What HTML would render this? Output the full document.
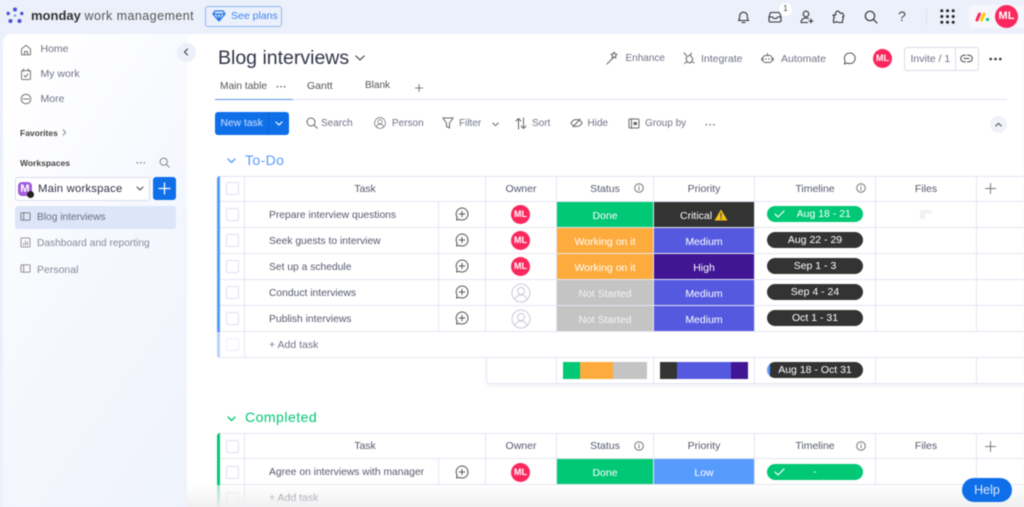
<!DOCTYPE html>
<html><head><meta charset="utf-8"><title>Blog interviews</title>
<style>
html,body{margin:0;padding:0;width:1024px;height:507px;overflow:hidden;background:#ecf0fb}
#p{position:absolute;left:0;top:0;width:1024px;height:507px;overflow:hidden;font-family:"Liberation Sans",sans-serif;color:#4b4e69;filter:blur(.5px)}
#p div,#p span,#p svg{position:absolute}
.t{white-space:nowrap;line-height:14px;font-size:10.5px}
.c{text-align:center;white-space:nowrap;line-height:14px;font-size:10.5px}
.h{color:#55586c;font-size:10.5px;text-align:center;white-space:nowrap;line-height:14px}
.l{background:#e4e6f3}
.b{width:11px;height:11px;border:1px solid #dfe1ee;border-radius:2px;left:226px;background:#fff}
.cell{text-align:center;color:#fff;font-size:10.5px;line-height:28.5px;white-space:nowrap}
.pill{left:767px;width:96px;height:16px;border-radius:8px;background:#333;color:#fff;text-align:center;font-size:10.5px;line-height:16px;white-space:nowrap}
.av{width:19px;height:19px;border-radius:50%;background:#fb275d;color:#fff;font-size:9px;font-weight:bold;line-height:19px;text-align:center}
svg{fill:none;stroke:#5a5d72;stroke-width:1;stroke-linecap:round;stroke-linejoin:round}
.g{color:#6f7285}
</style></head><body>
<div id="p">
<svg width="0" height="0"><defs>
<symbol id="cm" viewBox="0 0 14 14"><path d="M7 1a6 6 0 1 1-2.6 11.4L1.500 13l.7-2.700A6 6 0 0 1 7 1zM7 4.200v5.600M4.200 7h5.600"/></symbol>
<symbol id="pr" viewBox="0 0 20 20"><circle cx="10" cy="10" r="9"/><circle cx="10" cy="8" r="3.500"/><path d="M4 16.500c1-3.500 3.500-4.500 6-4.500s5 1 6 4.500"/></symbol>
<symbol id="in" viewBox="0 0 10 10"><circle cx="5" cy="5" r="4.300"/><path d="M5 4.500v2.500M5 2.900v.2"/></symbol>
<symbol id="pg" viewBox="0 0 12 12"><rect x="1" y="2" width="10" height="8" rx="1"/><path d="M4 2v8"/></symbol>
</defs></svg>

<!-- sidebar & main -->
<div style="left:3px;top:34px;width:200px;height:473px;border-radius:8px 0 0 0;background:linear-gradient(125deg,#fff 10%,#f5f7fe 55%,#eff3fc 100%)"></div>
<div style="left:187px;top:34px;width:837px;height:473px;background:#fff;border-radius:8px 0 0 0"></div>

<!-- top bar -->
<svg style="left:5px;top:6px" width="20" height="20" viewBox="0 0 20 20"><g fill="#4b50d6" stroke="none"><circle cx="10" cy="3.500" r="2"/><circle cx="3.200" cy="7.500" r="1.700"/><circle cx="16.800" cy="7.500" r="1.700"/><circle cx="10" cy="9.500" r="1.300" fill="#8f93ea"/><circle cx="5.500" cy="15" r="2"/><circle cx="14.500" cy="15" r="2"/></g></svg>
<span class="t" style="left:31px;top:9px;font-size:13px;font-weight:bold;color:#333">monday</span>
<span class="t" style="left:84.500px;top:9px;font-size:12.500px;color:#555;letter-spacing:.45px">work management</span>
<div style="left:205px;top:6px;width:75px;height:19px;border:1px solid #8fb8f4;border-radius:3px"></div>
<svg style="left:212px;top:10px;stroke:#1f76ea;stroke-width:1.300" width="14" height="12" viewBox="0 0 14 12"><path d="M3 1h8l2 3-6 7-6-7zM1 4h12M5 4l2 7 2-7"/></svg>
<span class="t" style="left:231px;top:9px;color:#3c85ee;font-size:10.500px">See plans</span>

<svg style="left:737px;top:10px;stroke:#333;stroke-width:1.100" width="13" height="14" viewBox="0 0 13 14"><path d="M1.500 10.500c1-1 1.200-2 1.200-4.500a3.800 3.800 0 0 1 7.600 0c0 2.500.2 3.500 1.200 4.500zM5 12.500h3"/></svg>
<svg style="left:768px;top:11px;stroke:#333;stroke-width:1.100" width="14" height="12" viewBox="0 0 14 12"><path d="M1 6l1.500-4.500h9L13 6v3.500a1.500 1.500 0 0 1-1.500 1.500h-9A1.500 1.500 0 0 1 1 9.500zM1 6h3.500l1 1.500h3l1-1.500H13"/></svg>
<div style="left:779px;top:3px;width:13px;height:13px;border-radius:50%;background:#fff"></div>
<span class="c" style="left:779px;top:2px;width:13px;font-size:8px;color:#444">1</span>
<svg style="left:800px;top:10px;stroke:#333;stroke-width:1.100" width="15" height="14" viewBox="0 0 15 14"><circle cx="6" cy="4" r="2.800"/><path d="M1 12.500c.3-3 2-4.500 5-4.500 1 0 1.800.2 2.500.6M1 12.500h6.500M11 9v4M9 11h4"/></svg>
<svg style="left:832px;top:10px;stroke:#333;stroke-width:1.100" width="14" height="14" viewBox="0 0 14 14"><path d="M1 5h3a2 2 0 0 1 3.500-3l1 1.500 2-.5 1.500 3-1.500 1a1.800 1.800 0 0 1 0 3V12.500H6a1.800 1.800 0 0 0-3 0H1.500V9a1.800 1.800 0 0 0 0-3z"/></svg>
<svg style="left:864px;top:10px;stroke:#333;stroke-width:1.200" width="14" height="14" viewBox="0 0 14 14"><circle cx="6" cy="6" r="4.700"/><path d="M9.500 9.500L13 13"/></svg>
<span class="t" style="left:897px;top:9px;font-size:14px;color:#444;width:10px;text-align:center">?</span>
<div style="left:926px;top:9px;width:1px;height:16px;background:#dde1ef"></div>
<svg style="left:940px;top:9px" width="15" height="15" viewBox="0 0 15 15"><g fill="#222" stroke="none"><circle cx="1.800" cy="1.800" r="1.500"/><circle cx="7.500" cy="1.800" r="1.500"/><circle cx="13.200" cy="1.800" r="1.500"/><circle cx="1.800" cy="7.500" r="1.500"/><circle cx="7.500" cy="7.500" r="1.500"/><circle cx="13.200" cy="7.500" r="1.500"/><circle cx="1.800" cy="13.200" r="1.500"/><circle cx="7.500" cy="13.200" r="1.500"/><circle cx="13.200" cy="13.200" r="1.500"/></g></svg>
<div style="left:969px;top:5px;width:55px;height:23px;background:#f5f7fd;border-radius:3px"></div>
<svg style="left:975px;top:11px;stroke-width:3" width="15" height="11" viewBox="0 0 15 11"><path d="M2 9l2.500-6" stroke="#fb275d"/><path d="M6.500 9L9 3" stroke="#ffcb00"/><circle cx="12.500" cy="8.500" r="1.600" fill="#00ca72" stroke="none"/></svg>
<div class="av" style="left:995px;top:5px;width:23px;height:23px;line-height:23px;font-size:11px">ML</div>

<!-- sidebar content -->
<div style="left:177px;top:43px;width:19px;height:19px;border-radius:50%;background:#ecf0fb"></div>
<svg style="left:183px;top:48px;stroke:#333" width="6" height="8" viewBox="0 0 6 8"><path d="M4.500 1L1.500 4l3 3"/></svg>

<svg style="left:20px;top:44px;stroke:#777" width="12" height="12" viewBox="0 0 12 12"><path d="M1.500 5L6 1.200 10.500 5v5.800h-9zM4.500 10.800V7.500h3v3.300"/></svg>
<span class="t g" style="left:40.500px;top:42px">Home</span>
<svg style="left:20px;top:68px;stroke:#777" width="12" height="13" viewBox="0 0 12 13"><rect x="1.500" y="2.500" width="9" height="9" rx="1"/><path d="M3.500 1v2.500M8.500 1v2.500M4 7.500l1.500 1.500L8 6"/></svg>
<span class="t g" style="left:40.500px;top:67px">My work</span>
<svg style="left:20px;top:93px;stroke:#777" width="12" height="12" viewBox="0 0 12 12"><circle cx="6" cy="6" r="4.800"/><path d="M3 6h6"/></svg>
<span class="t g" style="left:40.500px;top:91.500px">More</span>
<span class="t" style="left:20px;top:125.500px;font-size:8.500px;color:#444;font-weight:bold">Favorites</span>
<svg style="left:62px;top:129px;stroke:#888" width="5" height="7" viewBox="0 0 5 7"><path d="M1 .8l2.700 2.700L1 6.200"/></svg>
<span class="t" style="left:20px;top:155.500px;font-size:8.500px;color:#444;font-weight:bold">Workspaces</span>
<span class="t" style="left:136px;top:156px;font-size:9px;color:#777;font-weight:bold;letter-spacing:.5px">···</span>
<svg style="left:159px;top:157px;stroke:#888" width="11" height="11" viewBox="0 0 11 11"><circle cx="4.700" cy="4.700" r="3.600"/><path d="M7.500 7.500l2.800 2.800"/></svg>
<div style="left:15px;top:177px;width:133px;height:22px;border:1px solid #d9dcea;border-radius:3px;background:#fff"></div>
<div style="left:18px;top:182px;width:14px;height:14px;border-radius:4px;background:#a25ddc;color:#fff;font-size:11px;font-weight:bold;line-height:14px;text-align:center">M</div>
<div style="left:27px;top:191px;width:7px;height:7px;border-radius:50%;background:#222"></div>
<span class="t" style="left:38px;top:181.500px;font-size:11.300px;color:#2f3146;letter-spacing:.2px">Main workspace</span>
<svg style="left:136px;top:186px;stroke:#444" width="8" height="6" viewBox="0 0 8 6"><path d="M1 1l3 3 3-3"/></svg>
<div style="left:153px;top:177px;width:23px;height:23px;background:#0f6fe8;border-radius:3px"></div>
<svg style="left:158px;top:182px;stroke:#fff;stroke-width:1.300" width="13" height="13" viewBox="0 0 13 13"><path d="M6.500 1v11M1 6.500h11"/></svg>
<div style="left:15px;top:206px;width:161px;height:23px;background:#dce6f8;border-radius:3px"></div>
<svg style="left:20px;top:211px;stroke:#777" width="11" height="11"><use href="#pg"/></svg>
<span class="t g" style="left:37px;top:211px;font-size:10.200px;color:#6a6d80">Blog interviews</span>
<svg style="left:20px;top:237px;stroke:#999" width="11" height="11" viewBox="0 0 11 11"><rect x="1" y="1" width="9" height="9" rx="1"/><path d="M3.500 8V6.500M5.500 8V4M7.500 8V5"/></svg>
<span class="t g" style="left:37px;top:237px;font-size:10.200px;color:#85889a">Dashboard and reporting</span>
<svg style="left:20px;top:263px;stroke:#888" width="11" height="11"><use href="#pg"/></svg>
<span class="t g" style="left:37px;top:262.500px;color:#85889a">Personal</span>

<!-- board header -->
<span class="t" style="left:218px;top:47px;font-size:19.500px;line-height:23px;color:#33354a">Blog interviews</span>
<svg style="left:355px;top:55px;stroke:#444;stroke-width:1.200" width="10" height="7" viewBox="0 0 10 7"><path d="M1 1l4 4 4-4"/></svg>

<svg style="left:606px;top:51px;stroke:#666" width="14" height="14" viewBox="0 0 14 14"><path d="M1 13l6.500-6.500M8 1l1 2 2 .2-1.500 1.600.5 2.200-2-1-2 1 .5-2.200L5 3.200 7 3z"/></svg>
<span class="t g" style="left:625.500px;top:51.500px;font-size:10px">Enhance</span>
<svg style="left:683px;top:52px;stroke:#666" width="12" height="13" viewBox="0 0 12 13"><path d="M1 1l2.500 2.500M3 5.500L7 3l3 4-2.500 4L4 10zM8.500 1l-1 2M11 11l-2-1.500M1.500 11.500L4 9.500"/></svg>
<span class="t g" style="left:701px;top:51.500px">Integrate</span>
<svg style="left:761px;top:52px;stroke:#666" width="13" height="12" viewBox="0 0 13 12"><rect x="2" y="3.500" width="9" height="7" rx="2.500"/><path d="M6.500 1.500v2M.8 6v2.500M12.200 6v2.500M5 6.500v1M8 6.500v1"/></svg>
<span class="t g" style="left:781px;top:51.500px">Automate</span>
<svg style="left:843px;top:52px;stroke:#555" width="13" height="13" viewBox="0 0 13 13"><path d="M6.700 1a5.300 5.300 0 1 1-2.300 10l-3 1 .8-2.900A5.300 5.300 0 0 1 6.700 1z"/></svg>
<div class="av" style="left:873px;top:49px">ML</div>
<div style="left:904px;top:47px;width:73px;height:22px;border:1px solid #d9dbe8;border-radius:3px"></div>
<div style="left:955px;top:47px;width:1px;height:23px;background:#d9dbe8"></div>
<span class="t g" style="left:910.500px;top:51.500px">Invite / 1</span>
<svg style="left:960px;top:54px;stroke:#444" width="13" height="9" viewBox="0 0 13 9"><path d="M5.500 1.200H4a3.300 3.300 0 0 0 0 6.600h1.500M7.500 1.200H9a3.300 3.300 0 0 1 0 6.600H7.500M4 4.500h5"/></svg>
<svg style="left:989px;top:57px" width="13" height="4" viewBox="0 0 13 4"><g fill="#333" stroke="none"><circle cx="1.700" cy="2" r="1.300"/><circle cx="6.500" cy="2" r="1.300"/><circle cx="11.300" cy="2" r="1.300"/></g></svg>

<!-- tabs -->
<span class="t" style="left:220px;top:79.500px;font-size:10.200px;color:#555">Main table</span>
<span class="t" style="left:276px;top:81px;font-size:10px;font-weight:bold;color:#666;letter-spacing:.3px">···</span>
<span class="t" style="left:307px;top:79px;font-size:10.500px;color:#555">Gantt</span>
<span class="t" style="left:365px;top:79px;font-size:10px;color:#555">Blank</span>
<svg style="left:415px;top:84px;stroke:#777" width="8" height="8" viewBox="0 0 8 8"><path d="M4 .5v7M.5 4h7"/></svg>
<div style="left:215px;top:99px;width:792px;height:1px;background:#dfe4f3"></div>
<div style="left:215px;top:99px;width:78px;height:1px;background:#5a93ec"></div>

<!-- toolbar -->
<div style="left:215px;top:112px;width:74px;height:23px;background:#0f6fe8;border-radius:3px"></div>
<div style="left:268px;top:112px;width:1px;height:23px;background:#0d63d0"></div>
<span class="t" style="left:220.500px;top:117px;color:#cfe1fb;font-size:10.300px">New task</span>
<svg style="left:275px;top:121px;stroke:#fff;stroke-width:1.200" width="8" height="6" viewBox="0 0 8 6"><path d="M1 1l3 3 3-3"/></svg>
<svg style="left:306px;top:117px;stroke:#666" width="12" height="12" viewBox="0 0 12 12"><circle cx="5" cy="5" r="4"/><path d="M8 8l3.300 3.300"/></svg>
<span class="t g" style="left:321px;top:117px;font-size:10px">Search</span>
<svg style="left:374px;top:117px;stroke:#555" width="12" height="12"><use href="#pr"/></svg>
<span class="t g" style="left:392px;top:117px;font-size:10px">Person</span>
<svg style="left:442px;top:117px;stroke:#666" width="12" height="12" viewBox="0 0 12 12"><path d="M.8 1h10.400L7.500 6v5L4.500 9.500V6z"/></svg>
<span class="t g" style="left:459px;top:117px;font-size:10px">Filter</span>
<svg style="left:492px;top:122px;stroke:#666" width="7" height="5" viewBox="0 0 7 5"><path d="M.8 1l2.700 2.700L6.200 1"/></svg>
<svg style="left:515px;top:117px;stroke:#666" width="12" height="13" viewBox="0 0 12 13"><path d="M3.500 12V1.500M1 4l2.500-2.500L6 4M8.500 1v10.500M6 9l2.500 2.500L11 9"/></svg>
<span class="t g" style="left:532px;top:117px;font-size:10px">Sort</span>
<svg style="left:570px;top:118px;stroke:#666" width="13" height="10" viewBox="0 0 13 10"><path d="M.8 5C2.500 2.500 4.500 1.500 6.500 1.500S10.500 2.500 12.200 5C10.500 7.500 8.500 8.500 6.500 8.500S2.500 7.500.8 5zM10 1L3 9"/></svg>
<span class="t g" style="left:587.500px;top:117px;font-size:10px">Hide</span>
<svg style="left:628px;top:118px;stroke:#666" width="12" height="11" viewBox="0 0 12 11"><rect x="1" y="1" width="10" height="9" rx="1"/><path d="M3.500 1v9"/><rect x="5.500" y="4" width="3.500" height="3" fill="#666" stroke="none"/></svg>
<span class="t g" style="left:645px;top:117px;font-size:10px">Group by</span>
<span class="t" style="left:705px;top:118.500px;font-size:10px;font-weight:bold;color:#777;letter-spacing:.4px">···</span>
<div style="left:990px;top:115.500px;width:17px;height:17px;border-radius:50%;background:#f0f2f9"></div>
<svg style="left:995px;top:122px;stroke:#444" width="7" height="5" viewBox="0 0 7 5"><path d="M.8 4l2.700-2.700L6.200 4"/></svg>

<!-- To-Do group -->
<svg style="left:227px;top:158px;stroke:#579bfc;stroke-width:1.300" width="9" height="6" viewBox="0 0 9 6"><path d="M1 1l3.500 3.500L8 1"/></svg>
<span class="t" style="left:245px;top:152px;font-size:14px;line-height:16px;color:#579bfc;letter-spacing:.4px">To-Do</span>

<div style="left:217px;top:176px;width:3px;height:156px;background:#579bfc;border-radius:3px 0 0 0"></div>
<div style="left:217px;top:332px;width:3px;height:26px;background:#b9d3fb;border-radius:0 0 0 3px"></div>
<div class="l" style="left:220px;top:176px;width:804px;height:1px"></div>
<div class="l" style="left:220px;top:201px;width:804px;height:1px"></div>
<div class="l" style="left:220px;top:227px;width:804px;height:1px"></div>
<div class="l" style="left:220px;top:253px;width:804px;height:1px"></div>
<div class="l" style="left:220px;top:279px;width:804px;height:1px"></div>
<div class="l" style="left:220px;top:305px;width:804px;height:1px"></div>
<div class="l" style="left:220px;top:331px;width:804px;height:1px"></div>
<div class="l" style="left:220px;top:357px;width:804px;height:1px"></div>
<div class="l" style="left:244px;top:176px;width:1px;height:182px"></div>
<div class="l" style="left:438px;top:202px;width:1px;height:130px"></div>
<div class="l" style="left:485px;top:176px;width:1px;height:156px"></div>
<div class="l" style="left:556px;top:176px;width:1px;height:156px"></div>
<div class="l" style="left:653px;top:176px;width:1px;height:156px"></div>
<div class="l" style="left:754px;top:176px;width:1px;height:156px"></div>
<div class="l" style="left:875px;top:176px;width:1px;height:156px"></div>
<div class="l" style="left:976px;top:176px;width:1px;height:156px"></div>

<div class="b" style="top:182px"></div><div class="b" style="top:208px"></div><div class="b" style="top:234px"></div><div class="b" style="top:260px"></div><div class="b" style="top:286px"></div><div class="b" style="top:312px"></div><div class="b" style="top:338px;border-color:#eceef6"></div>

<span class="h" style="left:245px;top:181.500px;width:240px">Task</span>
<span class="h" style="left:486px;top:181.500px;width:70px">Owner</span>
<span class="h" style="left:557px;top:181.500px;width:96px">Status</span>
<svg style="left:634px;top:183px;stroke:#777" width="10" height="10"><use href="#in"/></svg>
<span class="h" style="left:654px;top:181.500px;width:100px">Priority</span>
<span class="h" style="left:755px;top:181.500px;width:120px">Timeline</span>
<svg style="left:856px;top:183px;stroke:#777" width="10" height="10"><use href="#in"/></svg>
<span class="h" style="left:876px;top:181.500px;width:100px">Files</span>
<svg style="left:985px;top:183px;stroke:#777" width="11" height="11" viewBox="0 0 11 11"><path d="M5.500 .5v10M.5 5.500h10"/></svg>

<span class="t" style="left:269px;top:208.500px;font-size:10.300px;color:#55586c">Prepare interview questions</span>
<span class="t" style="left:269px;top:234.500px;font-size:10.300px;color:#55586c">Seek guests to interview</span>
<span class="t" style="left:269px;top:260.500px;font-size:10.300px;color:#55586c">Set up a schedule</span>
<span class="t" style="left:269px;top:286.500px;font-size:10.300px;color:#55586c">Conduct interviews</span>
<span class="t" style="left:269px;top:312.500px;font-size:10.300px;color:#55586c">Publish interviews</span>
<span class="t g" style="left:269px;top:338px">+ Add task</span>

<svg style="left:454.500px;top:206.500px;stroke:#555" width="14" height="14"><use href="#cm"/></svg>
<svg style="left:454.500px;top:232.500px;stroke:#555" width="14" height="14"><use href="#cm"/></svg>
<svg style="left:454.500px;top:258.500px;stroke:#555" width="14" height="14"><use href="#cm"/></svg>
<svg style="left:454.500px;top:284.500px;stroke:#555" width="14" height="14"><use href="#cm"/></svg>
<svg style="left:454.500px;top:310.500px;stroke:#555" width="14" height="14"><use href="#cm"/></svg>

<div class="av" style="left:511px;top:205px">ML</div>
<div class="av" style="left:511px;top:231px">ML</div>
<div class="av" style="left:511px;top:257px">ML</div>
<svg style="left:511px;top:283px;stroke:#c9cbd8" width="20" height="20"><use href="#pr"/></svg>
<svg style="left:511px;top:309px;stroke:#c9cbd8" width="20" height="20"><use href="#pr"/></svg>

<div class="cell" style="left:557px;top:202px;width:96px;height:25px;background:#00c875">Done</div>
<div class="cell" style="left:557px;top:228px;width:96px;height:25px;background:#fdab3d">Working on it</div>
<div class="cell" style="left:557px;top:254px;width:96px;height:25px;background:#fdab3d">Working on it</div>
<div class="cell" style="left:557px;top:280px;width:96px;height:25px;background:#c4c4c4;color:#f4f4f4">Not Started</div>
<div class="cell" style="left:557px;top:306px;width:96px;height:25px;background:#c4c4c4;color:#f4f4f4">Not Started</div>

<div class="cell" style="left:654px;top:202px;width:100px;height:25px;background:#333"><span style="left:26px;top:0">Critical</span></div>
<svg style="left:714px;top:209px;stroke:none" width="14" height="12" viewBox="0 0 14 12"><path d="M7 .5L13.500 11.500H.5z" fill="#f5c518"/><path d="M7 4v4M7 9.300v.7" stroke="#444" stroke-width="1.100"/></svg>
<div class="cell" style="left:654px;top:228px;width:100px;height:25px;background:#5559df">Medium</div>
<div class="cell" style="left:654px;top:254px;width:100px;height:25px;background:#401694">High</div>
<div class="cell" style="left:654px;top:280px;width:100px;height:25px;background:#5559df">Medium</div>
<div class="cell" style="left:654px;top:306px;width:100px;height:25px;background:#5559df">Medium</div>

<div class="pill" style="top:206px;background:#00c875">&nbsp;&nbsp;&nbsp;&nbsp;&nbsp;&nbsp;Aug 18 - 21</div>
<svg style="left:774px;top:210px;stroke:#fff;stroke-width:1.200" width="11" height="8" viewBox="0 0 11 8"><path d="M1 4l3 3 6-6"/></svg>
<div class="pill" style="top:232px">Aug 22 - 29</div>
<div class="pill" style="top:258px">Sep 1 - 3</div>
<div class="pill" style="top:284px">Sep 4 - 24</div>
<div class="pill" style="top:310px">Oct 1 - 31</div>

<svg style="left:920px;top:210px;stroke:none" width="12" height="10" viewBox="0 0 12 10"><path d="M0 0h12v3.500H5V9H0z" fill="#f0f1f5"/></svg>

<!-- summary -->
<div style="left:486px;top:357px;width:538px;height:26px;border:1px solid #e4e6f3;border-top:0;border-right:0;border-radius:0 0 0 5px;box-shadow:0 2px 3px rgba(200,205,225,.25)"></div>
<div class="l" style="left:556px;top:358px;width:1px;height:26px"></div>
<div class="l" style="left:653px;top:358px;width:1px;height:26px"></div>
<div class="l" style="left:754px;top:358px;width:1px;height:26px"></div>
<div class="l" style="left:875px;top:358px;width:1px;height:26px"></div>
<div class="l" style="left:976px;top:358px;width:1px;height:26px"></div>
<div style="left:563px;top:362px;width:17px;height:17px;background:#00c875"></div>
<div style="left:580px;top:362px;width:33px;height:17px;background:#fdab3d"></div>
<div style="left:613px;top:362px;width:34px;height:17px;background:#c4c4c4"></div>
<div style="left:660px;top:362px;width:17px;height:17px;background:#333"></div>
<div style="left:677px;top:362px;width:54px;height:17px;background:#5559df"></div>
<div style="left:731px;top:362px;width:17px;height:17px;background:#401694"></div>
<div class="pill" style="top:362px;background:linear-gradient(90deg,#579bfc 3px,#333 3px)">Aug 18 - Oct 31</div>

<!-- Completed group -->
<svg style="left:227px;top:416px;stroke:#00c875;stroke-width:1.300" width="9" height="6" viewBox="0 0 9 6"><path d="M1 1l3.500 3.500L8 1"/></svg>
<span class="t" style="left:245px;top:409px;font-size:14px;line-height:16px;color:#00c875;letter-spacing:.5px">Completed</span>
<div style="left:217px;top:433px;width:3px;height:52px;background:#00c875;border-radius:3px 0 0 0"></div>
<div style="left:217px;top:485px;width:3px;height:22px;background:#a5e6c8"></div>
<div class="l" style="left:220px;top:433px;width:804px;height:1px"></div>
<div class="l" style="left:220px;top:458px;width:804px;height:1px"></div>
<div class="l" style="left:220px;top:484px;width:804px;height:1px"></div>
<div class="l" style="left:244px;top:433px;width:1px;height:74px"></div>
<div class="l" style="left:438px;top:459px;width:1px;height:25px"></div>
<div class="l" style="left:485px;top:433px;width:1px;height:51px"></div>
<div class="l" style="left:556px;top:433px;width:1px;height:51px"></div>
<div class="l" style="left:653px;top:433px;width:1px;height:51px"></div>
<div class="l" style="left:754px;top:433px;width:1px;height:51px"></div>
<div class="l" style="left:875px;top:433px;width:1px;height:51px"></div>
<div class="l" style="left:976px;top:433px;width:1px;height:51px"></div>
<div class="b" style="top:440px"></div><div class="b" style="top:466px"></div><div class="b" style="top:492px;border-color:#eceef6"></div>
<span class="h" style="left:245px;top:438.500px;width:240px">Task</span>
<span class="h" style="left:486px;top:438.500px;width:70px">Owner</span>
<span class="h" style="left:557px;top:438.500px;width:96px">Status</span>
<svg style="left:634px;top:441px;stroke:#777" width="10" height="10"><use href="#in"/></svg>
<span class="h" style="left:654px;top:438.500px;width:100px">Priority</span>
<span class="h" style="left:755px;top:438.500px;width:120px">Timeline</span>
<svg style="left:856px;top:441px;stroke:#777" width="10" height="10"><use href="#in"/></svg>
<span class="h" style="left:876px;top:438.500px;width:100px">Files</span>
<svg style="left:985px;top:441px;stroke:#777" width="11" height="11" viewBox="0 0 11 11"><path d="M5.500 .5v10M.5 5.500h10"/></svg>
<span class="t" style="left:269px;top:465.500px;font-size:10.300px;color:#55586c">Agree on interviews with manager</span>
<svg style="left:454.500px;top:464.500px;stroke:#555" width="14" height="14"><use href="#cm"/></svg>
<div class="av" style="left:511px;top:463px">ML</div>
<div class="cell" style="left:557px;top:459px;width:96px;height:25px;background:#00c875">Done</div>
<div class="cell" style="left:654px;top:459px;width:100px;height:25px;background:#579bfc">Low</div>
<div class="pill" style="top:464px;background:#00c875">-</div>
<svg style="left:774px;top:468px;stroke:#fff;stroke-width:1.200" width="11" height="8" viewBox="0 0 11 8"><path d="M1 4l3 3 6-6"/></svg>
<span class="t g" style="left:269px;top:491px">+ Add task</span>

<!-- bottom fade -->
<div style="left:187px;top:485px;width:837px;height:22px;background:linear-gradient(180deg,rgba(240,240,240,0),rgba(238,238,238,.9))"></div>
<div style="left:962px;top:478px;width:50px;height:24px;border-radius:12px;background:#0f6fe8;color:#dce9fc;font-size:12.500px;line-height:24px;text-align:center">Help</div>
</div>
</body></html>
